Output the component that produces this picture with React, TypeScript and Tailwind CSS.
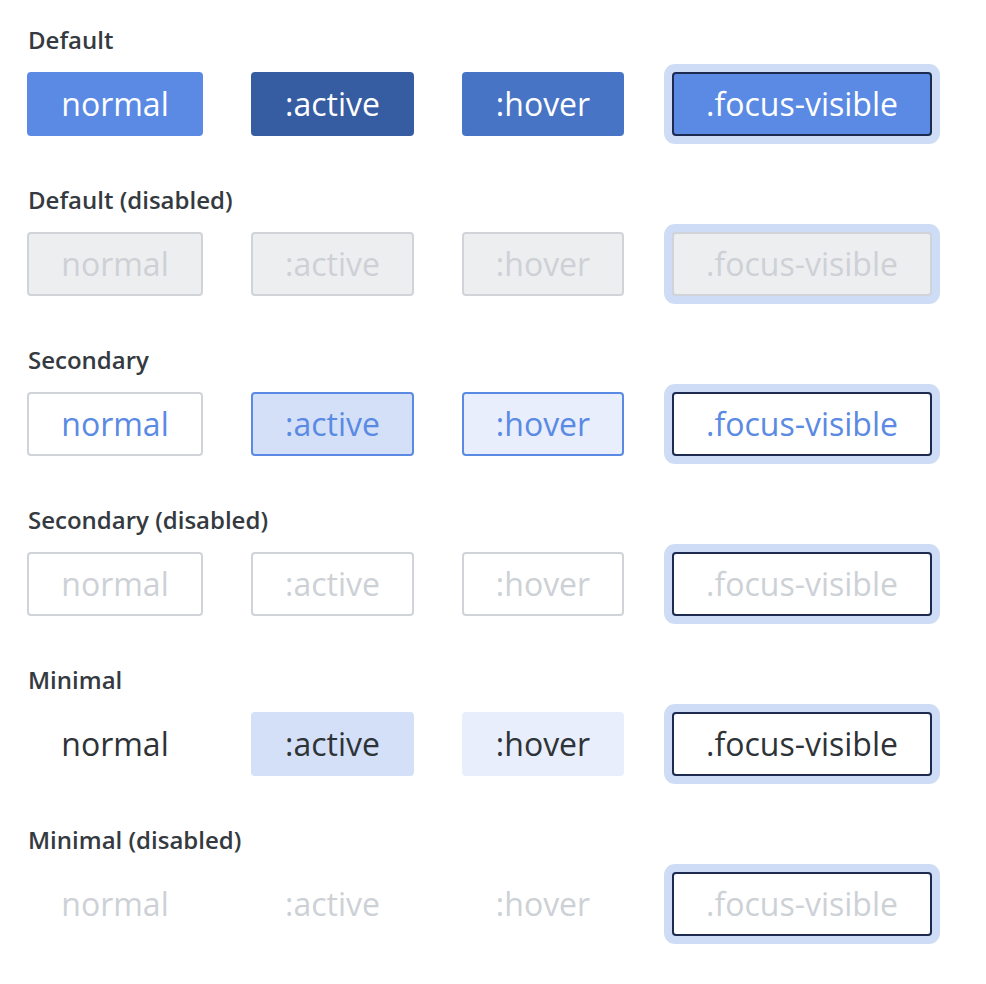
import React from "react";

const states = [
  { label: "normal", w: "w-[176px]" },
  { label: ":active", w: "w-[163px]" },
  { label: ":hover", w: "w-[162px]" },
  { label: ".focus-visible", w: "w-[260px]" },
];

// classes per section, per state
const sections: { title: string; styles: string[] }[] = [
  {
    title: "Default",
    styles: [
      "bg-[#5a8ae4] border-[#5a8ae4] text-white",
      "bg-[#365ca2] border-[#365ca2] text-white",
      "bg-[#4874c6] border-[#4874c6] text-white",
      "bg-[#5a8ae4] border-[#1c2b4f] text-white",
    ],
  },
  {
    title: "Default (disabled)",
    styles: [
      "bg-[#edeef0] border-[#d0d4d9] text-[#cdd1d6]",
      "bg-[#edeef0] border-[#d0d4d9] text-[#cdd1d6]",
      "bg-[#edeef0] border-[#d0d4d9] text-[#cdd1d6]",
      "bg-[#edeef0] border-[#d0d4d9] text-[#cdd1d6]",
    ],
  },
  {
    title: "Secondary",
    styles: [
      "bg-white border-[#d0d4d9] text-[#5a8ae4]",
      "bg-[#d4e0f7] border-[#5a8ae4] text-[#5a8ae4]",
      "bg-[#e8eefb] border-[#5a8ae4] text-[#5a8ae4]",
      "bg-white border-[#1c2b4f] text-[#5a8ae4]",
    ],
  },
  {
    title: "Secondary (disabled)",
    styles: [
      "bg-white border-[#d0d4d9] text-[#cdd1d6]",
      "bg-white border-[#d0d4d9] text-[#cdd1d6]",
      "bg-white border-[#d0d4d9] text-[#cdd1d6]",
      "bg-white border-[#1c2b4f] text-[#cdd1d6]",
    ],
  },
  {
    title: "Minimal",
    styles: [
      "bg-white border-white text-[#2e3338]",
      "bg-[#d4e0f7] border-[#d4e0f7] text-[#2e3338]",
      "bg-[#e8eefb] border-[#e8eefb] text-[#2e3338]",
      "bg-white border-[#1c2b4f] text-[#2e3338]",
    ],
  },
  {
    title: "Minimal (disabled)",
    styles: [
      "bg-white border-white text-[#cdd1d6]",
      "bg-white border-white text-[#cdd1d6]",
      "bg-white border-white text-[#cdd1d6]",
      "bg-white border-[#1c2b4f] text-[#cdd1d6]",
    ],
  },
];

const App: React.FC = () => {
  return (
    <div
      className="min-h-screen bg-white pl-[27px] pt-[28px] flex flex-col gap-[52px]"
      style={{ fontFamily: '"Open Sans", "Noto Sans", sans-serif' }}
    >
      {sections.map((section) => (
        <div key={section.title} className="flex flex-col gap-[20px]">
          <div className="pl-px text-[24px] leading-[24px] font-semibold text-[#343a40]">
            {section.title}
          </div>
          <div className="flex items-center gap-12">
            {states.map((state, i) => (
              <button
                key={state.label}
                className={`${state.w} h-16 flex items-center justify-center rounded-[4px] border-2 text-[32px] font-normal leading-none ${
                  i === 3 ? "ring-8 ring-[#cfdcf5]" : ""
                } ${section.styles[i]}`}
              >
                {state.label}
              </button>
            ))}
          </div>
        </div>
      ))}
    </div>
  );
};

export default App;
